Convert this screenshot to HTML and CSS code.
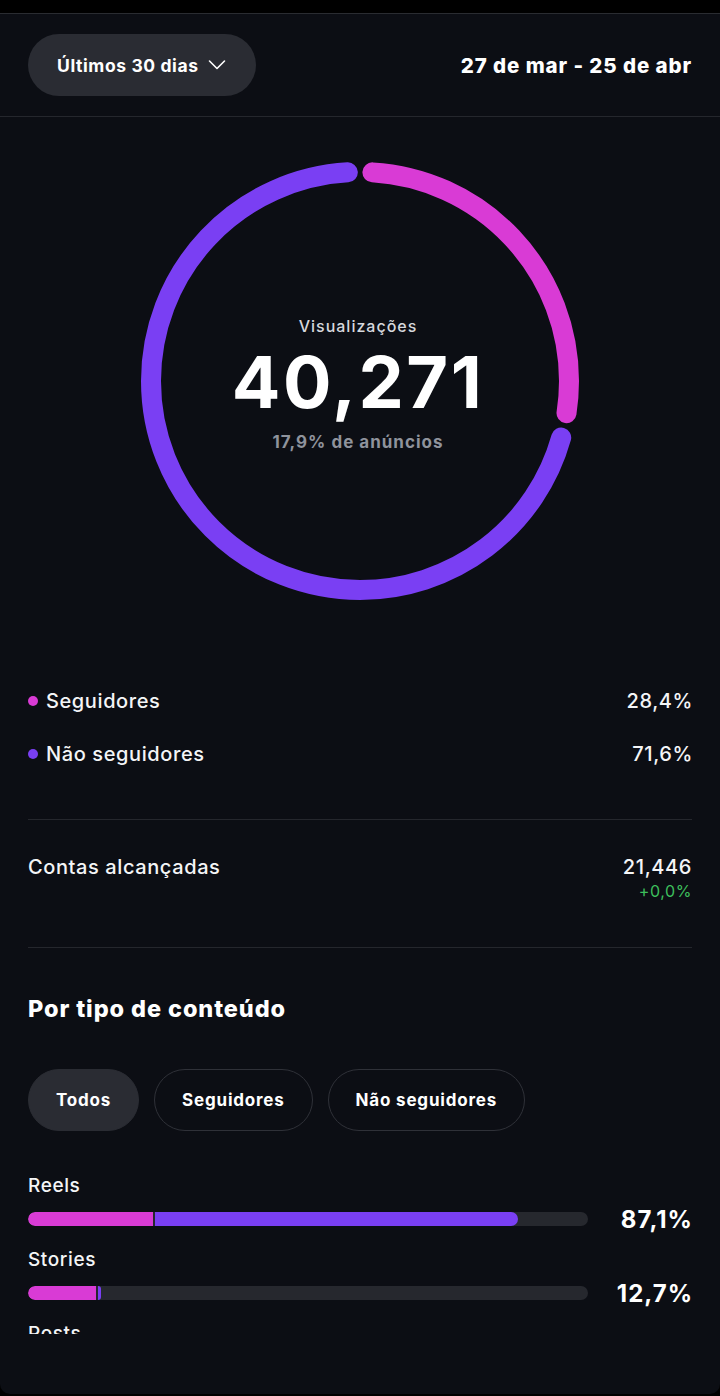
FILE: index.html
```html
<!DOCTYPE html>
<html lang="pt">
<head>
  <meta charset="UTF-8">
  <title>Visualizações</title>
  <link rel="stylesheet" href="styles.css">
</head>
<body>
  <div class="statusbar"></div>
  <div class="screen">
    <div class="header">
      <button class="period">
        Últimos 30 dias
        <svg width="18" height="12" viewBox="0 0 18 12"><path d="M1.5 2 L9 9.5 L16.5 2" fill="none" stroke="#fff" stroke-width="1.6" stroke-linecap="round" stroke-linejoin="round"/></svg>
      </button>
      <div class="range">27 de mar - 25 de abr</div>
    </div>

    <div class="scroll">
      <div class="donut">
        <svg width="440" height="440" viewBox="0 0 440 440">
          <g transform="rotate(-90 220 220)">
            <circle cx="220" cy="220" r="209" fill="none" stroke="#7a3ff3" stroke-width="20" stroke-linecap="round" stroke-dasharray="915 2000" stroke-dashoffset="-385.4"/>
            <circle cx="220" cy="220" r="209" fill="none" stroke="#d93bd5" stroke-width="20" stroke-linecap="round" stroke-dasharray="348 2000" stroke-dashoffset="-12.5"/>
          </g>
        </svg>
        <div class="donut-label">
          <div class="donut-title">Visualizações</div>
          <div class="donut-value">40,271</div>
          <div class="donut-sub">17,9% de anúncios</div>
        </div>
      </div>

      <div class="legend">
        <div class="row">
          <span class="name"><i class="dot pink"></i>Seguidores</span>
          <span class="num">28,4%</span>
        </div>
        <div class="row">
          <span class="name"><i class="dot purple"></i>Não seguidores</span>
          <span class="num">71,6%</span>
        </div>
      </div>

      <div class="reach">
        <span>Contas alcançadas</span>
        <div class="reach-num">
          <div>21,446</div>
          <div class="up">+0,0%</div>
        </div>
      </div>

      <div class="content">
        <h2>Por tipo de conteúdo</h2>
        <div class="chips">
          <button class="chip active">Todos</button>
          <button class="chip">Seguidores</button>
          <button class="chip">Não seguidores</button>
        </div>

        <div class="items">
          <div class="item">
            <div class="item-name">Reels</div>
            <div class="item-row">
              <div class="track">
                <div class="seg pink" style="width: 22.3%"></div>
                <div class="seg purple" style="width: 64.8%"></div>
              </div>
              <div class="pct">87,1%</div>
            </div>
          </div>
          <div class="item">
            <div class="item-name">Stories</div>
            <div class="item-row">
              <div class="track">
                <div class="seg pink" style="width: 12.1%"></div>
                <div class="seg purple" style="width: 0.6%"></div>
              </div>
              <div class="pct">12,7%</div>
            </div>
          </div>
          <div class="item">
            <div class="item-name">Posts</div>
          </div>
        </div>
      </div>
    </div>
  </div>
</body>
</html>
```

FILE: styles.css
```css
body {
  margin: 0;
  background-color: #000;
  font-family: 'Inter', 'Roboto', sans-serif;
  color: #f4f5f7;
}
.statusbar {
  height: 13px;
  background-color: #000;
}
.screen {
  height: 1380px;
  background-color: #0c0e14;
  border-top: 1px solid #2a2c31;
  border-radius: 0 0 10px 10px;
  overflow: hidden;
}
.header {
  display: flex;
  justify-content: space-between;
  align-items: center;
  height: 102px;
  padding: 0 28px;
  border-bottom: 1px solid #25272d;
}
.period {
  display: flex;
  align-items: center;
  gap: 9px;
  height: 62px;
  padding: 0 30px 0 29px;
  background-color: #2a2c33;
  border: none;
  border-radius: 31px;
  color: #fff;
  font-family: inherit;
  font-size: 17.5px;
  font-weight: 700;
  letter-spacing: 0.6px;
}
.range {
  font-size: 20.5px;
  font-weight: 800;
  letter-spacing: 0.9px;
  color: #fff;
}

.scroll {
  height: 1217px;
  overflow: hidden;
}

.donut {
  display: grid;
  justify-content: center;
  align-items: center;
  padding-top: 44px;
}
.donut svg,
.donut-label {
  grid-area: 1 / 1;
}
.donut-label {
  text-align: center;
  margin: 6px 4px 0 0;
}
.donut-title {
  font-size: 16px;
  font-weight: 500;
  letter-spacing: 1px;
  color: #d6d8dd;
}
.donut-value {
  font-size: 72px;
  font-weight: 700;
  letter-spacing: 2.5px;
  color: #fff;
  line-height: 92px;
}
.donut-sub {
  font-size: 17px;
  font-weight: 700;
  letter-spacing: 1px;
  color: #8f939c;
  margin-top: 4px;
}

.legend {
  margin: 0 28px;
  padding: 73px 0 39px;
  border-bottom: 1px solid #25272d;
}
.row {
  display: flex;
  justify-content: space-between;
  align-items: center;
  height: 53px;
  font-size: 20px;
  font-weight: 500;
  letter-spacing: 0.6px;
}
.num {
  margin-right: -1px;
}
.name {
  display: flex;
  align-items: center;
}
.dot {
  width: 10px;
  height: 10px;
  border-radius: 50%;
  margin-right: 8px;
}
.pink {
  background-color: #d93bd5;
}
.purple {
  background-color: #7a3ff3;
}

.reach {
  display: flex;
  justify-content: space-between;
  align-items: flex-start;
  margin: 0 28px;
  padding: 35px 0 44px;
  border-bottom: 1px solid #25272d;
  font-size: 20px;
  font-weight: 500;
  letter-spacing: 0.6px;
  line-height: 24px;
}
.reach-num {
  text-align: right;
}
.up {
  font-size: 16px;
  font-weight: 400;
  line-height: 24px;
  color: #3dbf5c;
}

.content {
  padding: 47px 28px 0;
}
h2 {
  margin: 0;
  font-size: 23.5px;
  line-height: 28px;
  font-weight: 800;
  letter-spacing: 0.9px;
  color: #fff;
}
.chips {
  display: flex;
  gap: 15px;
  margin-top: 46px;
}
.chip {
  height: 62px;
  padding: 0 27px;
  border-radius: 31px;
  border: 1px solid #2f3138;
  background: none;
  color: #fff;
  font-family: inherit;
  font-size: 17px;
  font-weight: 700;
  letter-spacing: 0.8px;
}
.chip.active {
  background-color: #2a2c33;
  border-color: #2a2c33;
}

.items {
  padding-top: 44px;
}
.item + .item {
  margin-top: 23px;
}
.item-name {
  font-size: 19px;
  font-weight: 500;
  letter-spacing: 0.6px;
  line-height: 22px;
}
.item-row {
  display: flex;
  align-items: center;
  height: 14px;
  margin-top: 15px;
}
.track {
  display: flex;
  gap: 2px;
  width: 560px;
  height: 14px;
  background-color: #26282e;
  border-radius: 7px;
  overflow: hidden;
}
.seg:first-child {
  border-radius: 7px 0 0 7px;
}
.seg.purple:last-child {
  border-radius: 0 7px 7px 0;
}
.pct {
  flex: 1;
  text-align: right;
  margin-right: -1px;
  font-size: 24px;
  font-weight: 700;
  letter-spacing: 1px;
  color: #fff;
}
```
